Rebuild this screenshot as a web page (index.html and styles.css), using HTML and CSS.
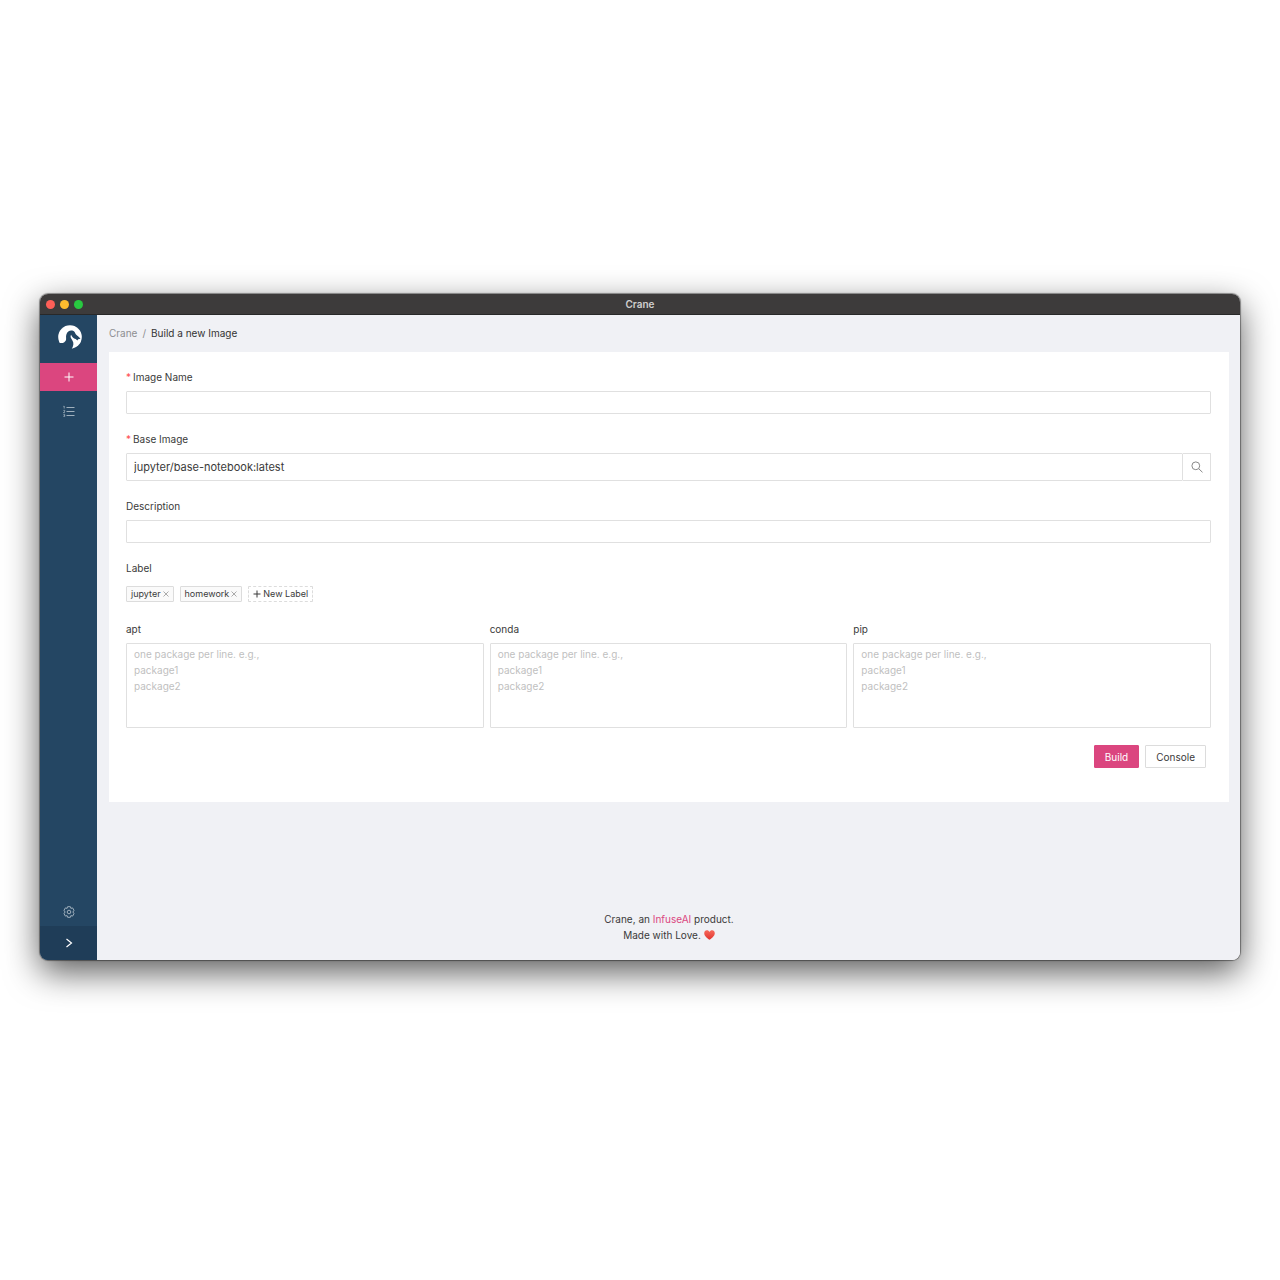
FILE: index.html
```html
<!DOCTYPE html>
<html lang="en">
<head>
<meta charset="UTF-8">
<meta name="viewport" content="width=device-width, initial-scale=1.0">
<title>Crane</title>
<link rel="stylesheet" href="styles.css">
</head>
<body>
<div class="window">
  <!-- Title Bar -->
  <header class="titlebar">
    <div class="lights">
      <span class="light light-close"></span>
      <span class="light light-minimize"></span>
      <span class="light light-zoom"></span>
    </div>
    <span class="window-title">Crane</span>
  </header>

  <div class="layout">
    <!-- Sidebar -->
    <aside class="sidebar">
      <a class="logo" href="#" aria-label="Crane">
        <svg viewBox="0 0 24 24" width="24" height="24">
          <circle cx="12" cy="12" r="11.800" fill="#fff"/>
          <path fill="#244663" d="M0 18.300l2.200-.4c2.600.4 4.600-.6 5.600-2.500.8-1.700-.2-3.500.5-5.700C9.300 6.300 12 5 14.300 5.600c1.900.5 2.700 1.900 3.300 3.400.9 1.500 3.200 2.600 4.900 4.700l-2.400.5-.7 1.300-1.700-1.500c-2.200-.5-3.700-2-4.600-4.200-1.200 1.600-.2 3.500 1.300 5.700 1.700 2.500 1.100 5.200-.7 8.500H0z"/>
        </svg>
      </a>
      <nav class="menu">
        <a class="menu-item active" href="#" aria-label="Build a new Image">
          <svg viewBox="0 0 12 12" width="12" height="12"><path d="M6 1.500v9M1.500 6h9"/></svg>
        </a>
        <a class="menu-item" href="#" aria-label="Images">
          <svg viewBox="0 0 12 12" width="12" height="12"><path d="M3.500 2.500h8M3.500 6.500h8M3.500 10.500h8"/><path stroke-width=".8" d="M1.200 1v2.500M.4 1.300h.8M.4 5.400h1.400v.8L.4 7.600h1.500M.4 9.400h1.300v2.200H.4M.8 10.500h.9"/></svg>
        </a>
      </nav>
      <a class="menu-item settings" href="#" aria-label="Settings">
        <svg viewBox="0 0 12 12" width="12" height="12"><path d="M4.600.7h2.800l.5 1.700 1.700-.5L11 4.300 9.900 6 11 7.700l-1.400 2.400-1.700-.5-.5 1.700H4.600l-.5-1.700-1.700.5L1 7.700 2.100 6 1 4.300l1.400-2.400 1.700.5z"/><circle cx="6" cy="6" r="1.800"/></svg>
      </a>
      <button class="expand" type="button" aria-label="Expand sidebar">
        <svg viewBox="0 0 12 12" width="12" height="12"><path stroke-width="1.200" d="M3.500 2l5 4-5 4"/></svg>
      </button>
    </aside>

    <main class="main">
      <nav class="breadcrumb">
        <a href="#">Crane</a>
        <span class="separator">/</span>
        <span class="current">Build a new Image</span>
      </nav>

      <!-- Build Form -->
      <form class="card">
        <div class="field">
          <label class="required" for="imageName">Image Name</label>
          <input class="input" type="text" id="imageName">
        </div>

        <div class="field">
          <label class="required" for="baseImage">Base Image</label>
          <div class="search">
            <input class="input input-large" type="text" id="baseImage" value="jupyter/base-notebook:latest">
            <button class="search-button" type="button" aria-label="Search">
              <svg viewBox="0 0 12 12" width="12" height="12"><circle cx="4.800" cy="4.800" r="3.900"/><path d="M7.700 7.700l3.800 3.600"/></svg>
            </button>
          </div>
        </div>

        <div class="field">
          <label for="description">Description</label>
          <input class="input" type="text" id="description">
        </div>

        <div class="field">
          <span class="label">Label</span>
          <div class="tags">
            <span class="tag">jupyter
              <button class="tag-close" type="button" aria-label="Remove jupyter"><svg viewBox="0 0 6 6" width="6" height="6"><path d="M.5 .5l5 5M5.500 .5l-5 5"/></svg></button>
            </span>
            <span class="tag">homework
              <button class="tag-close" type="button" aria-label="Remove homework"><svg viewBox="0 0 6 6" width="6" height="6"><path d="M.5 .5l5 5M5.500 .5l-5 5"/></svg></button>
            </span>
            <button class="tag tag-new" type="button"><svg viewBox="0 0 8 8" width="8" height="8"><path d="M4 .5v7M.5 4h7"/></svg>New Label</button>
          </div>
        </div>

        <div class="packages">
          <div class="package">
            <label for="apt">apt</label>
            <textarea id="apt" placeholder="one package per line. e.g.,&#10;package1&#10;package2"></textarea>
          </div>
          <div class="package">
            <label for="conda">conda</label>
            <textarea id="conda" placeholder="one package per line. e.g.,&#10;package1&#10;package2"></textarea>
          </div>
          <div class="package">
            <label for="pip">pip</label>
            <textarea id="pip" placeholder="one package per line. e.g.,&#10;package1&#10;package2"></textarea>
          </div>
        </div>

        <div class="actions">
          <button class="button button-primary" type="submit">Build</button>
          <button class="button" type="button">Console</button>
        </div>
      </form>

      <footer class="footer">
        <div>Crane, an <a href="#">InfuseAI</a> product.</div>
        <div class="love">Made with Love.
          <svg viewBox="0 0 12 11" width="11" height="10" role="img" aria-label="love">
            <defs>
              <linearGradient id="heart" x1="0" y1="0" x2="0" y2="1">
                <stop offset="0" stop-color="#f7685a"/>
                <stop offset="1" stop-color="#e0342f"/>
              </linearGradient>
            </defs>
            <path fill="url(#heart)" d="M6 10.800C3.500 9 .2 6.500.2 3.500.2 1.700 1.500.4 3.100.4 4.400.4 5.400 1 6 2.200 6.600 1 7.600.4 8.900.4c1.600 0 2.900 1.300 2.900 3.100 0 3-3.300 5.500-5.800 7.300z"/>
          </svg>
        </div>
      </footer>
    </main>
  </div>
</div>
</body>
</html>
```
FILE: styles.css
```css
* {
    box-sizing: border-box;
}

body {
    min-height: 100vh;
    margin: 0;
    padding: 294px 40px 40px;
    background-color: #fff;
    color: #3a3a3a;
    font-family: Inter, "Liberation Sans", sans-serif;
    font-size: 10px;
    line-height: 16px;
}

a {
    color: inherit;
    text-decoration: none;
}

button,
input,
textarea {
    margin: 0;
    font-family: inherit;
    font-size: inherit;
    line-height: inherit;
    color: inherit;
}

button {
    cursor: pointer;
}

svg {
    display: block;
    fill: none;
    stroke: currentColor;
}

/* Window */
.window {
    border-radius: 8px;
    overflow: hidden;
    box-shadow: 0 0 1px 1px rgba(0, 0, 0, 0.4), 0 12px 34px rgba(0, 0, 0, 0.65);
}

.titlebar {
    display: grid;
    grid-template-columns: 1fr auto 1fr;
    align-items: center;
    height: 21px;
    padding: 0 6px;
    background-color: #3d3b3b;
    border-bottom: 1px solid #282828;
    color: #d0cfcf;
    font-weight: 600;
}

.lights {
    display: flex;
    gap: 5px;
}

.light {
    width: 9px;
    height: 9px;
    border-radius: 50%;
}

.light-close {
    background-color: #ff5f57;
}

.light-minimize {
    background-color: #febc2e;
}

.light-zoom {
    background-color: #28c840;
}

.layout {
    display: flex;
    background-color: #f0f1f5;
}

/* Sidebar */
.sidebar {
    display: flex;
    flex-direction: column;
    flex: none;
    width: 57px;
    background-color: #244663;
}

.logo {
    display: flex;
    justify-content: center;
    padding: 10px 0 14px 3px;
}

.logo svg {
    stroke: none;
}

.menu {
    display: flex;
    flex-direction: column;
    gap: 6px;
    flex: 1;
}

.menu-item {
    display: flex;
    justify-content: center;
    align-items: center;
    height: 28px;
    color: #a0b0bd;
}

.menu-item.active {
    background-color: #db467f;
    color: #fff;
}

.expand {
    display: flex;
    justify-content: center;
    align-items: center;
    height: 34px;
    border: none;
    background-color: #1f3d58;
    color: #fff;
}

/* Main */
.main {
    flex: 1;
    min-width: 0;
    padding: 10px 11px 17px 12px;
}

.breadcrumb {
    display: flex;
    gap: 5px;
    margin-bottom: 11px;
    color: #8d8e91;
}

.breadcrumb .current {
    color: #333;
}

.card {
    padding: 17px 18px 34px 17px;
    background-color: #fff;
}

.field {
    margin-bottom: 17px;
}

label,
.label {
    display: block;
    margin-bottom: 6px;
}

.required::before {
    content: "*";
    margin-right: 2px;
    color: #ff4d4f;
}

.input,
textarea {
    display: block;
    width: 100%;
    border: 1px solid #e0e0e0;
    border-radius: 1px;
    background-color: #fff;
    outline: none;
}

.input {
    height: 23px;
    padding: 0 7px;
}

.input-large {
    height: 28px;
    font-size: 11px;
}

.search {
    display: flex;
}

.search-button {
    display: flex;
    justify-content: center;
    align-items: center;
    flex: none;
    width: 28px;
    border: 1px solid #e0e0e0;
    border-left: none;
    border-radius: 0 1px 1px 0;
    background-color: #fff;
    color: #888;
}

/* Tags */
.tags {
    display: flex;
    gap: 6px;
    padding: 4px 0 2px;
}

.tag {
    display: flex;
    align-items: center;
    gap: 2px;
    height: 16px;
    padding: 0 4px;
    border: 1px solid #dcdcdc;
    border-radius: 1px;
    background-color: #fafafa;
    font-size: 9px;
}

.tag-close {
    padding: 0;
    border: none;
    background: none;
    color: #888;
}

.tag-close svg {
    stroke-width: 0.7;
}

.tag-new {
    border-style: dashed;
    background-color: #fff;
}

/* Packages */
.packages {
    display: grid;
    grid-template-columns: repeat(3, 1fr);
    gap: 6px;
}

textarea {
    height: 85px;
    padding: 2px 7px;
    resize: none;
}

textarea::placeholder {
    color: #bfbfbf;
}

.actions {
    display: flex;
    justify-content: flex-end;
    gap: 6px;
    padding: 17px 5px 0 0;
}

.button {
    height: 23px;
    padding: 0 10px;
    border: 1px solid #dcdcdc;
    border-radius: 1px;
    background-color: #fff;
}

.button-primary {
    border-color: #db467f;
    background-color: #db467f;
    color: #fff;
}

/* Footer */
.footer {
    margin-top: 109px;
    text-align: center;
}

.footer a {
    color: #db467f;
}

.love {
    display: flex;
    justify-content: center;
    align-items: center;
    gap: 3px;
}

.love svg {
    stroke: none;
}
```
